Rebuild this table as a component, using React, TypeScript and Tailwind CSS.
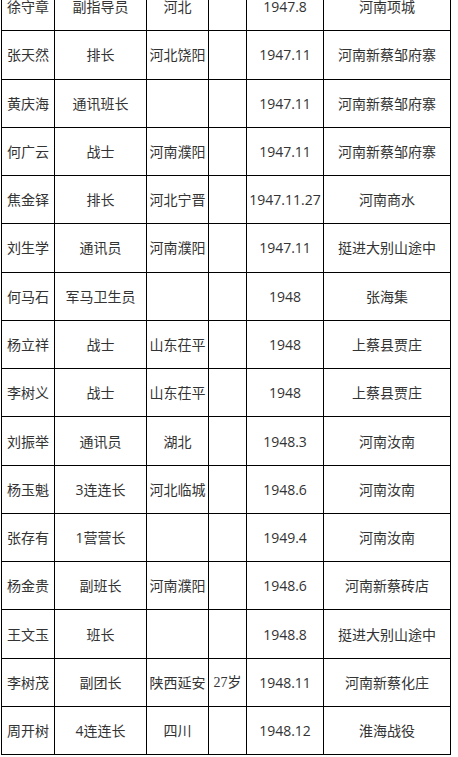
import React from "react";

type Row = {
  name: string;
  post: string;
  home: string;
  age?: string;
  date: string;
  place: string;
};

const ROWS: Row[] = [
  { name: "徐守章", post: "副指导员", home: "河北", date: "1947.8", place: "河南项城" },
  { name: "张天然", post: "排长", home: "河北饶阳", date: "1947.11", place: "河南新蔡邹府寨" },
  { name: "黄庆海", post: "通讯班长", home: "", date: "1947.11", place: "河南新蔡邹府寨" },
  { name: "何广云", post: "战士", home: "河南濮阳", date: "1947.11", place: "河南新蔡邹府寨" },
  { name: "焦金铎", post: "排长", home: "河北宁晋", date: "1947.11.27", place: "河南商水" },
  { name: "刘生学", post: "通讯员", home: "河南濮阳", date: "1947.11", place: "挺进大别山途中" },
  { name: "何马石", post: "军马卫生员", home: "", date: "1948", place: "张海集" },
  { name: "杨立祥", post: "战士", home: "山东茌平", date: "1948", place: "上蔡县贾庄" },
  { name: "李树义", post: "战士", home: "山东茌平", date: "1948", place: "上蔡县贾庄" },
  { name: "刘振举", post: "通讯员", home: "湖北", date: "1948.3", place: "河南汝南" },
  { name: "杨玉魁", post: "3连连长", home: "河北临城", date: "1948.6", place: "河南汝南" },
  { name: "张存有", post: "1营营长", home: "", date: "1949.4", place: "河南汝南" },
  { name: "杨金贵", post: "副班长", home: "河南濮阳", date: "1948.6", place: "河南新蔡砖店" },
  { name: "王文玉", post: "班长", home: "", date: "1948.8", place: "挺进大别山途中" },
  { name: "李树茂", post: "副团长", home: "陕西延安", age: "27", date: "1948.11", place: "河南新蔡化庄" },
  { name: "周开树", post: "4连连长", home: "四川", date: "1948.12", place: "淮海战役" },
];

const cell = "border border-black p-0 text-center align-middle whitespace-nowrap";

export default function App() {
  return (
    <div className="h-[757px] w-[458px] overflow-hidden bg-white font-['Open_Sans','Noto_Sans_CJK_SC',sans-serif] text-[14px] text-[#333]">
      <table className="-mt-[18px] ml-px w-[449px] table-fixed border-collapse">
        <colgroup>
          <col className="w-[53px]" />
          <col className="w-[92px]" />
          <col className="w-[62px]" />
          <col className="w-[38px]" />
          <col className="w-[77px]" />
          <col className="w-[127px]" />
        </colgroup>
        <tbody>
          {ROWS.map((row) => (
            <tr key={row.name} className="h-[48.27px]">
              <td className={cell}>{row.name}</td>
              <td className={cell}>{row.post}</td>
              <td className={cell}>{row.home}</td>
              <td className={cell}>
                {row.age ? (
                  <span>
                    <span className="font-['Liberation_Serif',serif]">{row.age}</span>岁
                  </span>
                ) : null}
              </td>
              <td className={cell}>{row.date}</td>
              <td className={cell}>{row.place}</td>
            </tr>
          ))}
        </tbody>
      </table>
    </div>
  );
}
